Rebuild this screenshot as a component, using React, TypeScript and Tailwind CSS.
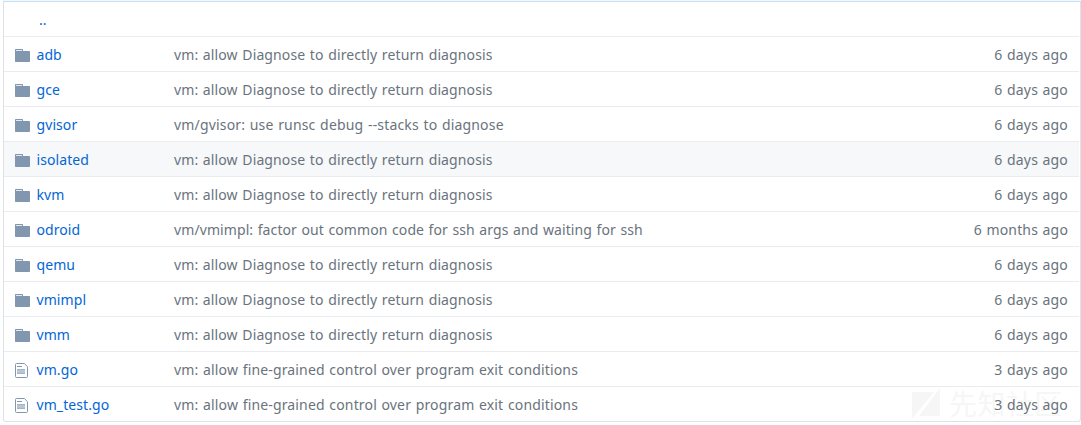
type Entry = { name: string; message: string; age: string; spacing: string; file?: boolean; active?: boolean };

const diagnose = { message: "vm: allow Diagnose to directly return diagnosis", age: "6 days ago", spacing: "tracking-[0.12px]" };
const exit = { message: "vm: allow fine-grained control over program exit conditions", age: "3 days ago", spacing: "tracking-[0.155px]", file: true };

const entries: Entry[] = [
  { name: "adb", ...diagnose },
  { name: "gce", ...diagnose },
  { name: "gvisor", message: "vm/gvisor: use runsc debug --stacks to diagnose", age: "6 days ago", spacing: "tracking-[0.17px]" },
  { name: "isolated", ...diagnose, active: true },
  { name: "kvm", ...diagnose },
  { name: "odroid", message: "vm/vmimpl: factor out common code for ssh args and waiting for ssh", age: "6 months ago", spacing: "tracking-[0.09px]" },
  { name: "qemu", ...diagnose },
  { name: "vmimpl", ...diagnose },
  { name: "vmm", ...diagnose },
  { name: "vm.go", ...exit },
  { name: "vm_test.go", ...exit },
];

function FolderIcon() {
  return (
    <svg viewBox="0 0 15 17" className="h-[17px] w-[15px]" aria-hidden="true">
      <path className="fill-[#8197b0]" d="M1 2h6c.6 0 1 .4 1 1v1h6c.6 0 1 .4 1 1v9c0 .6-.4 1-1 1H1c-.6 0-1-.4-1-1V3c0-.6.4-1 1-1z" />
      <path className="fill-[#e3e9ee]" d="M1 3h6v1H1z" />
    </svg>
  );
}

function FileIcon() {
  return (
    <svg viewBox="0 0 13 17" className="h-[17px] w-[13px]" aria-hidden="true">
      <path className="fill-none stroke-[#8197b0]" d="M1.5 1.5h7.8l3.2 3.2v9.8a1 1 0 0 1-1 1h-10a1 1 0 0 1-1-1v-12a1 1 0 0 1 1-1z" />
      <path className="fill-[#8197b0]" d="M2 4h5v1H2z" />
      <path className="fill-[#b9c5d3]" d="M2 7h8v5H2z" />
      <path className="fill-[#8197b0]/40" d="M2 7h8v1H2zm0 4h8v1H2z" />
    </svg>
  );
}

export default function App() {
  return (
    <div className="relative h-[425px] w-[1081px] overflow-hidden bg-white pl-[3px] font-['Noto_Sans','Noto_Sans_CJK_SC',sans-serif] text-[14px] leading-5 tracking-[0.08px] text-[#6a737d] [word-spacing:0.8px]">
      <div className="h-px bg-[#f1f8ff]" />
      <div className="h-[421px] rounded-b-[3px] border border-[#dfe2e5] border-t-[#c8dff5] pr-px">
        <div className="flex h-[34px] items-center pt-0.5 pl-[35px] text-[#0366d6]">..</div>
        {entries.map((entry) => (
          <div
            key={entry.name}
            className={`flex h-[35px] items-center border-t border-[#eaecef] pt-0.5 pr-[11px] pl-[11px] ${entry.active ? "bg-[#f6f8fa]" : ""}`}
          >
            <div className="flex w-[21.5px] items-center">{entry.file ? <FileIcon /> : <FolderIcon />}</div>
            <div className="w-[137.5px] whitespace-nowrap text-[#0366d6]">{entry.name}</div>
            <div className={`flex-1 whitespace-nowrap ${entry.spacing}`}>{entry.message}</div>
            <div className="whitespace-nowrap tracking-[0.15px]">{entry.age}</div>
          </div>
        ))}
      </div>
      <div className="pointer-events-none absolute top-[388px] left-[911px] flex items-center gap-2 text-black opacity-[0.03]">
        <svg viewBox="0 0 30 32" className="h-8 w-[30px] fill-current" aria-hidden="true">
          <path d="M1 4H23L1 31ZM29 0V28H8Z" />
        </svg>
        <span className="text-[28px] leading-8 tracking-[0.4px]">先知社区</span>
      </div>
    </div>
  );
}
